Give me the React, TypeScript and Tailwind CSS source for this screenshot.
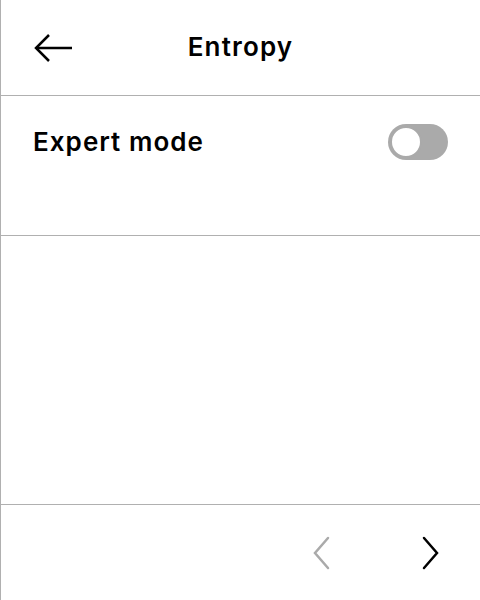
import { useState } from "react";

function BackArrow() {
  return (
    <svg width="40" height="32" viewBox="0 0 40 32" fill="none" stroke="#000" strokeWidth="2.5">
      <path d="M39 16H3" />
      <path d="M16 3L3 16l13 13" />
    </svg>
  );
}

function Chevron({ dir, color }: { dir: "left" | "right"; color: string }) {
  return (
    <svg width="20" height="34" viewBox="0 0 20 34" fill="none" stroke={color} strokeWidth="2.5" strokeLinecap="round">
      {dir === "left" ? <path d="M16 2L3 17l13 15" /> : <path d="M4 2l13 15L4 32" />}
    </svg>
  );
}

export default function App() {
  const [expert, setExpert] = useState(false);

  return (
    <div
      className="w-[480px] h-[600px] bg-white border-l border-[#b0b0b0] flex flex-col text-black"
      style={{ fontFamily: "Inter, 'Noto Sans', sans-serif" }}
    >
      <div className="h-[96px] shrink-0 border-b border-[#b0b0b0] relative flex items-center justify-center">
        <button className="absolute left-[32px] top-[32px]">
          <BackArrow />
        </button>
        <h1 className="text-[26px] font-semibold tracking-[0.045em] -mt-[2px]">Entropy</h1>
      </div>

      <div className="h-[140px] shrink-0 border-b border-[#b0b0b0] px-[32px] pt-[26px]">
        <div className="flex w-full items-center justify-between">
          <span className="text-[26px] font-semibold tracking-[0.04em]">Expert mode</span>
          <button
            onClick={() => setExpert(!expert)}
            className={`w-[60px] h-[36px] rounded-full flex items-center px-[2px] ${
              expert ? "bg-black justify-end" : "bg-[#aaaaaa] justify-start"
            }`}
          >
            <span className="w-[32px] h-[32px] rounded-full bg-white border-[2px] border-[#aaaaaa]" />
          </button>
        </div>
      </div>

      <div className="flex-1" />

      <div className="h-[96px] shrink-0 border-t border-[#b0b0b0] flex items-center justify-end gap-[88px] pr-[40px]">
        <Chevron dir="left" color="#aaaaaa" />
        <Chevron dir="right" color="#000" />
      </div>
    </div>
  );
}
